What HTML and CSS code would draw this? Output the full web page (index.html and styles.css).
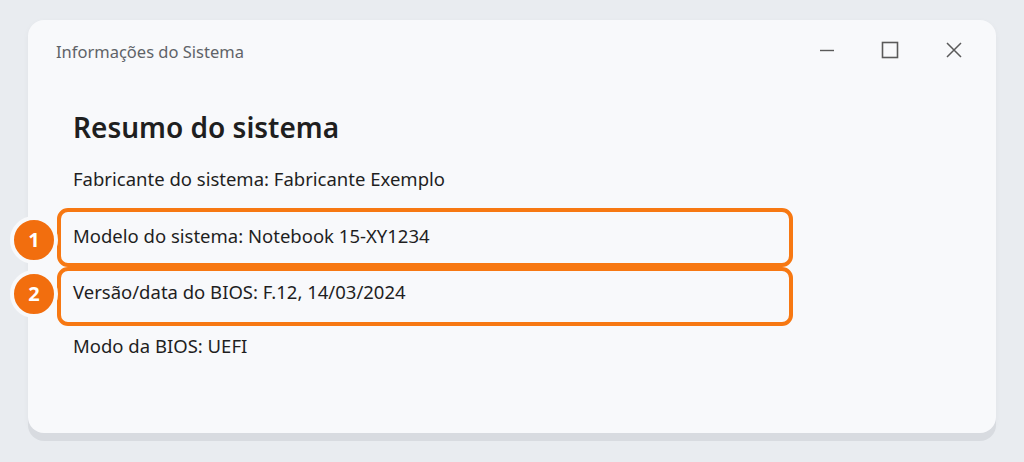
FILE: index.html
```html
<!DOCTYPE html>
<html lang="pt-BR">
<head>
    <meta charset="UTF-8">
    <meta name="viewport" content="width=device-width, initial-scale=1.0">
    <title>Informações do Sistema</title>
    <link rel="stylesheet" href="styles.css">
</head>
<body>
    <div class="window">
        <div class="titlebar">
            <span class="title">Informações do Sistema</span>
            <div class="controls">
                <span class="ctrl">
                    <svg width="16" height="16" viewBox="0 0 16 16"><path d="M1 8.5h14" stroke="#5a5a5a" stroke-width="1.4" fill="none"/></svg>
                </span>
                <span class="ctrl">
                    <svg width="18" height="18" viewBox="0 0 18 18"><rect x="1.5" y="1.5" width="15" height="15" stroke="#5a5a5a" stroke-width="1.6" fill="none"/></svg>
                </span>
                <span class="ctrl">
                    <svg width="18" height="18" viewBox="0 0 18 18"><path d="M2 2l14 14M16 2L2 16" stroke="#5a5a5a" stroke-width="1.5" fill="none"/></svg>
                </span>
            </div>
        </div>

        <div class="content">
            <h1>Resumo do sistema</h1>
            <div class="info">Fabricante do sistema: Fabricante Exemplo</div>
            <div class="info highlight first">
                <span class="badge">1</span>
                Modelo do sistema: Notebook 15-XY1234
            </div>
            <div class="info highlight second">
                <span class="badge">2</span>
                Versão/data do BIOS: F.12, 14/03/2024
            </div>
            <div class="info last">Modo da BIOS: UEFI</div>
        </div>
    </div>
</body>
</html>
```

FILE: styles.css
```css
body {
    font-family: 'Noto Sans', 'Open Sans', sans-serif;
    margin: 0;
    padding: 20px 28px;
    background-color: #e9ecf0;
    color: #1f1f1f;
}
.window {
    height: 413px;
    background-color: #f8f9fb;
    border-radius: 16px;
    box-shadow: 0 8px 0 #d8dbe0, 0 2px 6px rgba(0, 0, 0, 0.04);
}
.titlebar {
    height: 62px;
    display: flex;
    align-items: center;
    justify-content: space-between;
    padding: 0 28px;
}
.title {
    font-size: 16.5px;
    color: #5f6368;
}
.controls {
    display: flex;
    align-items: center;
    gap: 46px;
    margin-top: -3px;
    margin-right: 5px;
}
.ctrl {
    display: flex;
}
.content {
    padding: 28px 45px 0;
}
h1 {
    margin: 0 0 23px;
    font-size: 28px;
    font-weight: 600;
    line-height: 34px;
}
.info {
    font-size: 18.5px;
    line-height: 24px;
}
.highlight {
    position: relative;
    box-sizing: border-box;
    width: 736px;
    height: 59px;
    margin-left: -16px;
    padding: 0 12px 3px;
    display: flex;
    align-items: center;
    border: 4px solid #f77812;
    border-radius: 11px;
}
.first {
    margin-top: 17px;
}
.second {
    padding-bottom: 9px;
}
.last {
    margin-top: 8px;
}
.badge {
    position: absolute;
    left: -51px;
    top: 50%;
    margin-top: -22px;
    width: 40px;
    height: 40px;
    border-radius: 50%;
    background-color: #f26e0e;
    border: 4px solid #f8f9fb;
    color: white;
    font-weight: 700;
    font-size: 20px;
    display: flex;
    align-items: center;
    justify-content: center;
}
.second .badge {
    margin-top: -27px;
}
```
